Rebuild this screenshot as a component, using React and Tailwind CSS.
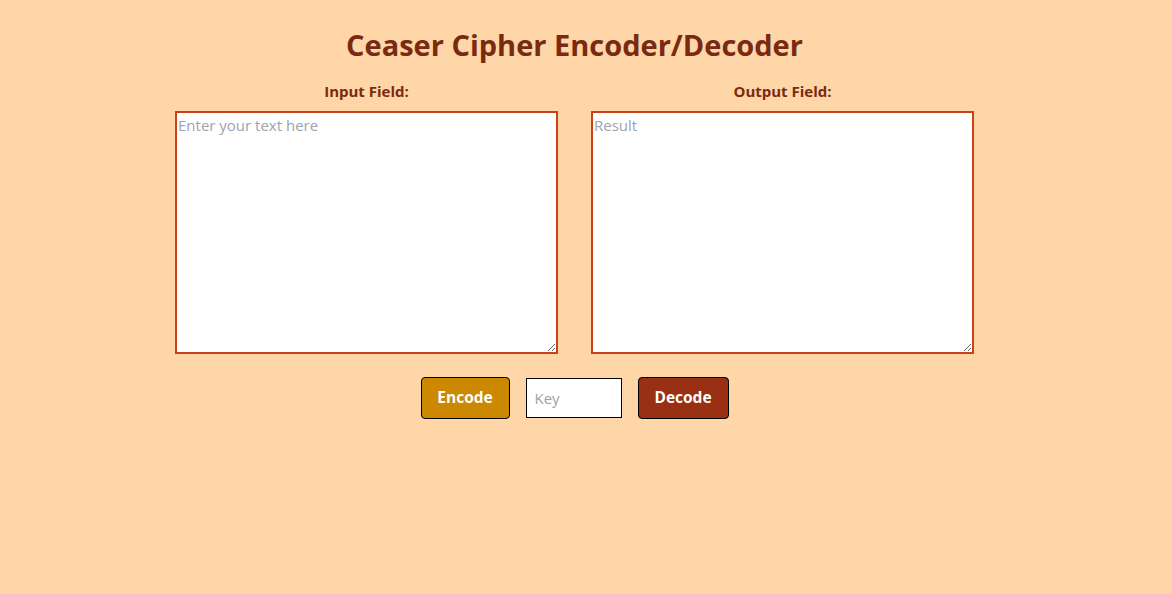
import React from "react";

export default function App() {
    return (
        <div
            className="min-h-[594px] w-full bg-[#fed6a8] flex flex-col items-center pt-[27px] pr-[23px]"
            style={{ fontFamily: "'Open Sans', 'Noto Sans', sans-serif" }}
        >
            <h1 className="text-[29px] leading-[36px] font-bold text-[#7b2a12]">
                Ceaser Cipher Encoder/Decoder
            </h1>

            <div className="mt-[18px] flex gap-[33px]">
                <div className="flex flex-col items-center">
                    <label className="text-[15px] leading-[20px] font-bold text-[#7b2a12] mb-[10px]">
                        Input Field:
                    </label>
                    <textarea
                        placeholder="Enter your text here"
                        className="w-[383px] h-[243px] bg-white border-2 border-[#c8431a] px-[1px] pt-[2px] text-[15px] leading-[20px] text-gray-800 placeholder:text-[#9ca3af] outline-none"
                    />
                </div>
                <div className="flex flex-col items-center">
                    <label className="text-[15px] leading-[20px] font-bold text-[#7b2a12] mb-[10px]">
                        Output Field:
                    </label>
                    <textarea
                        placeholder="Result"
                        readOnly
                        className="w-[383px] h-[243px] bg-white border-2 border-[#c8431a] px-[1px] pt-[2px] text-[15px] leading-[20px] text-gray-800 placeholder:text-[#9ca3af] outline-none"
                    />
                </div>
            </div>

            <div className="mt-[23px] flex items-center gap-[16px]">
                <button className="w-[89px] h-[42px] bg-[#cc8800] border border-black rounded-[4px] text-white font-bold text-[15.5px]">
                    Encode
                </button>
                <input
                    placeholder="Key"
                    className="w-[96px] h-[40px] bg-white border border-black px-[8px] text-[15px] text-gray-800 placeholder:text-[#9ca3af] outline-none"
                />
                <button className="w-[91px] h-[42px] bg-[#993014] border border-black rounded-[4px] text-white font-bold text-[15.5px]">
                    Decode
                </button>
            </div>
        </div>
    );
}
